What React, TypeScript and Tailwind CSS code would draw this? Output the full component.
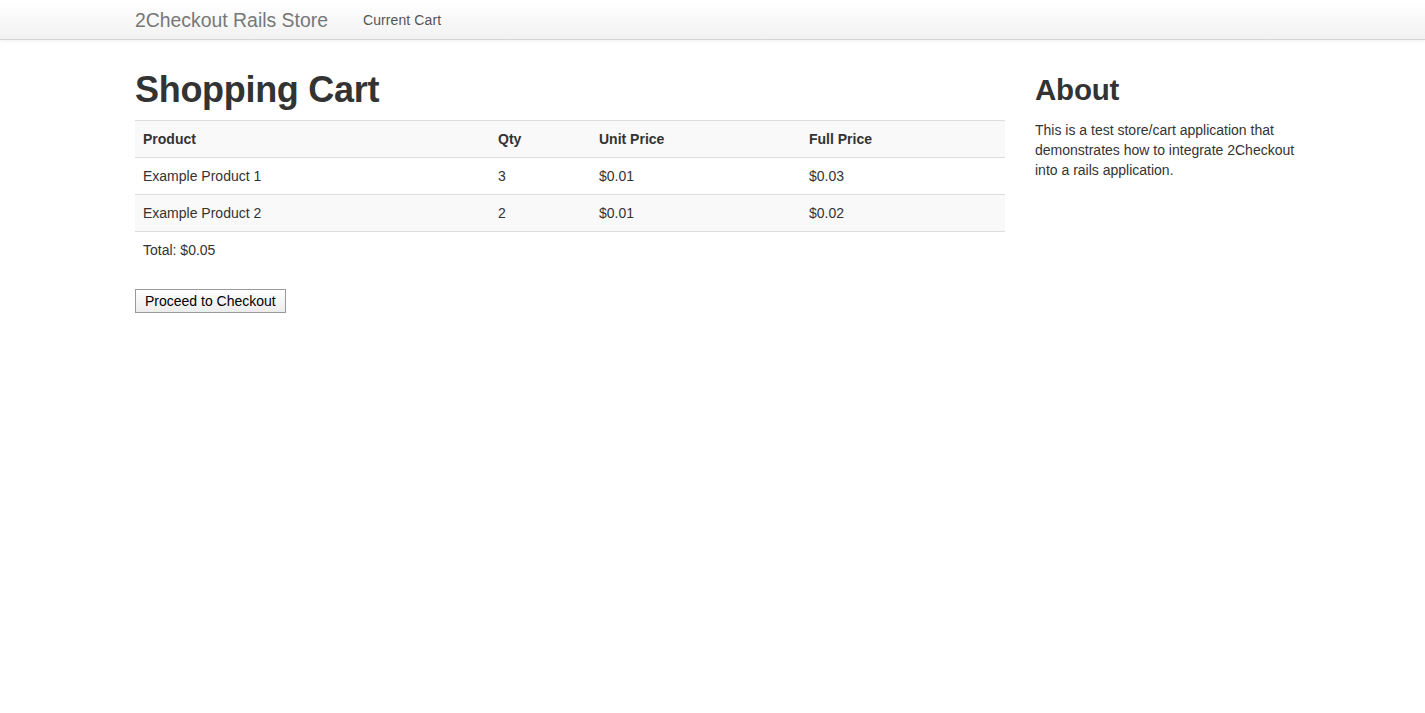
import React from "react";

const items = [
  { name: "Example Product 1", qty: 3, unit: "$0.01", full: "$0.03" },
  { name: "Example Product 2", qty: 2, unit: "$0.01", full: "$0.02" },
];

const App = () => {
  return (
    <div className="min-h-screen bg-white text-[14px] leading-[20px] text-[#333]" style={{ fontFamily: '"Liberation Sans", Arial, sans-serif' }}>
      {/* navbar */}
      <div className="h-[40px] border-b border-[#d4d4d4] bg-gradient-to-b from-white to-[#f2f2f2] shadow-[0_1px_4px_rgba(0,0,0,0.065)]">
        <div className="ml-[135px] flex h-full items-center">
          <a className="text-[19.4px] font-light text-[#777]">2Checkout Rails Store</a>
          <a className="ml-[35px] text-[14px] tracking-[0.1px] text-[#555]">Current Cart</a>
        </div>
      </div>

      <div className="ml-[135px] flex w-[1170px] gap-[30px] pt-[20px]">
        <div className="w-[870px]">
          <h1 className="my-[10px] text-[36px] leading-[40px] font-bold tracking-[-0.3px]">Shopping Cart</h1>
          <table className="w-full border-collapse">
            <tbody>
              <tr className="bg-[#f9f9f9] border-t border-[#ddd] font-bold">
                <td className="w-[355px] p-[8px]">Product</td>
                <td className="w-[101px] p-[8px]">Qty</td>
                <td className="w-[210px] p-[8px]">Unit Price</td>
                <td className="p-[8px]">Full Price</td>
              </tr>
              {items.map((item, i) => (
                <tr key={i} className={`border-t border-[#ddd] ${i % 2 === 1 ? "bg-[#f9f9f9]" : ""}`}>
                  <td className="p-[8px]">{item.name}</td>
                  <td className="p-[8px]">{item.qty}</td>
                  <td className="p-[8px]">{item.unit}</td>
                  <td className="p-[8px]">{item.full}</td>
                </tr>
              ))}
              <tr className="border-t border-[#ddd]">
                <td className="p-[8px]" colSpan={4}>Total: $0.05</td>
              </tr>
            </tbody>
          </table>
          <button className="mt-[21px] h-[24px] border border-[#999] bg-gradient-to-b from-white to-[#ececec] px-[9px] text-[14px] leading-[20px] text-black">
            Proceed to Checkout
          </button>
        </div>
        <div className="w-[270px]">
          <h2 className="my-[10px] text-[29.5px] leading-[40px] font-bold tracking-[-0.2px]">About</h2>
          <p>This is a test store/cart application that demonstrates how to integrate 2Checkout into a rails application.</p>
        </div>
      </div>
    </div>
  );
};

export default App;
